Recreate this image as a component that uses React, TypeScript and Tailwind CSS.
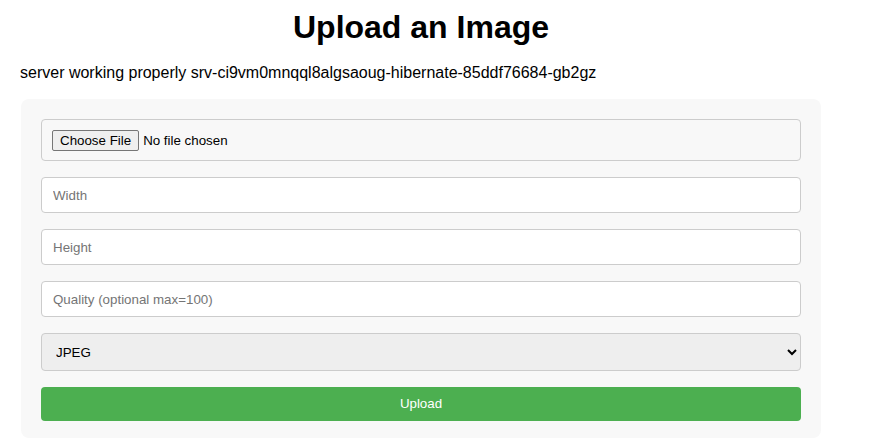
export default function App() {
  return (
    <div className="min-h-screen bg-white pl-5 pt-[9px] font-['Liberation_Sans',Arial,sans-serif] text-black">
      <div className="w-[801px]">
        <h1 className="pl-px text-center text-[32px] font-bold leading-[37px]">Upload an Image</h1>
        <p className="mt-[18px] text-base leading-[18px]">
          server working properly srv-ci9vm0mnqql8algsaoug-hibernate-85ddf76684-gb2gz
        </p>
        <form className="ml-px mt-[17px] flex w-[800px] flex-col gap-4 rounded-[8px] bg-[#f8f8f8] px-5 pb-[17px] pt-5">
          <div className="flex h-[42px] items-center rounded-[4px] border border-[#ccc] bg-[#f8f8f8] px-[10px]">
            <input
              type="file"
              className="text-[13.33px] file:mr-[4px] file:h-[21px] file:rounded-[2px] file:border file:border-solid file:border-[#767676] file:bg-[#efefef] file:px-[7px] file:text-black"
            />
          </div>
          <input
            type="text"
            placeholder="Width"
            className="h-[36px] rounded-[4px] border border-[#ccc] bg-white px-[11px] text-[13.33px] placeholder:text-[#757575] outline-none"
          />
          <input
            type="text"
            placeholder="Height"
            className="h-[36px] rounded-[4px] border border-[#ccc] bg-white px-[11px] text-[13.33px] placeholder:text-[#757575] outline-none"
          />
          <input
            type="text"
            placeholder="Quality (optional max=100)"
            className="h-[36px] rounded-[4px] border border-[#ccc] bg-white px-[11px] text-[13.33px] placeholder:text-[#757575] outline-none"
          />
          <select
            defaultValue="jpeg"
            className="h-[38px] rounded-[4px] border border-[#ccc] bg-[#eee] px-[10px] text-[13.33px] outline-none"
          >
            <option value="jpeg">JPEG</option>
            <option value="png">PNG</option>
            <option value="webp">WEBP</option>
          </select>
          <button
            type="button"
            className="h-[34px] rounded-[4px] bg-[#4caf50] text-[13.33px] text-white"
          >
            Upload
          </button>
        </form>
      </div>
    </div>
  );
}
